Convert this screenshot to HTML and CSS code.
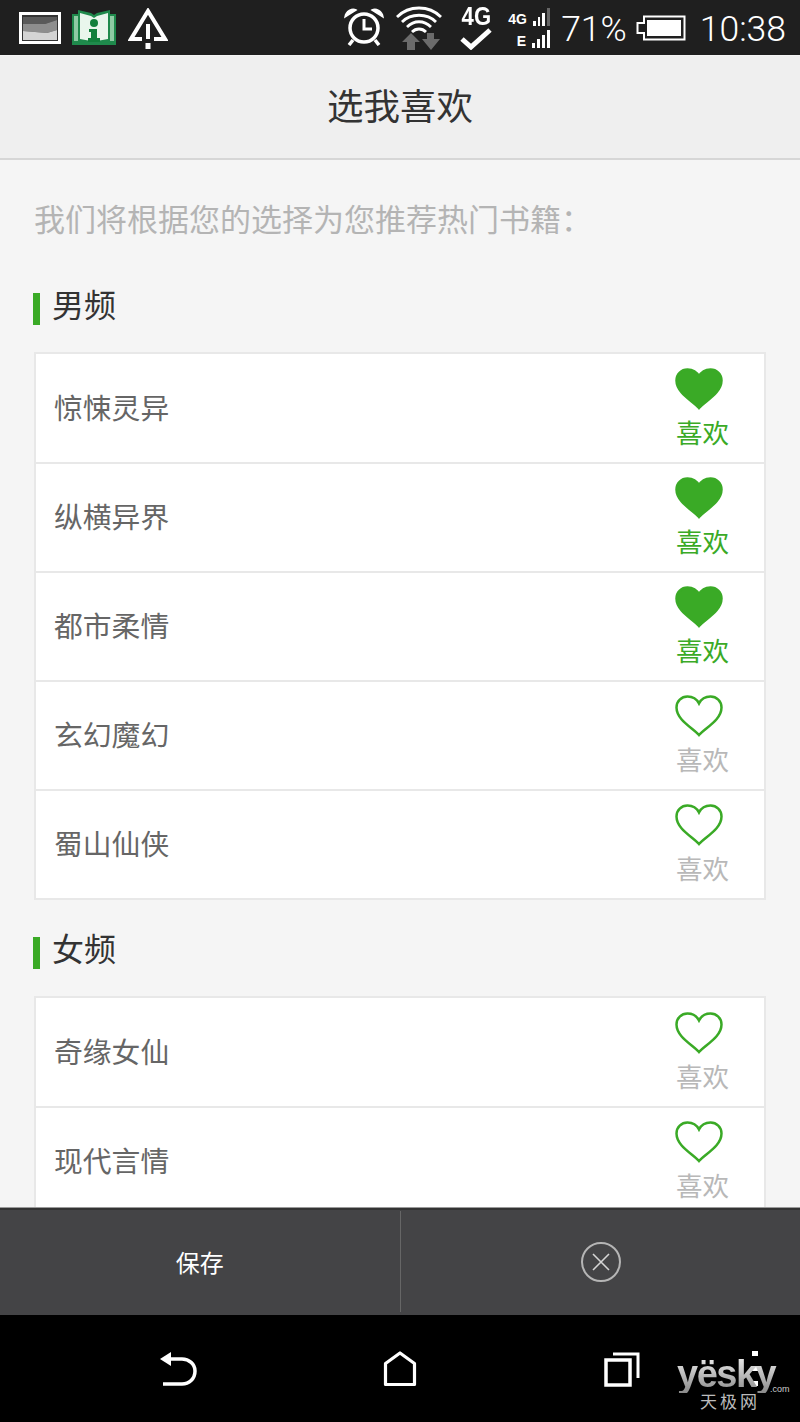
FILE: index.html
```html
<!DOCTYPE html>
<html lang="zh-CN">
<head>
    <meta charset="UTF-8">
    <title>选我喜欢</title>
    <link rel="stylesheet" href="styles.css">
</head>
<body>
<svg class="defs" width="0" height="0">
    <symbol id="heart" viewBox="0 0 48 42">
        <path d="M24 40C18 33 1.500 25 1.500 12.500C1.500 6 6.500 1.500 12.500 1.500C17.500 1.500 22 4.500 24 8.500C26 4.500 30.500 1.500 35.500 1.500C41.500 1.500 46.500 6 46.500 12.500C46.500 25 30 33 24 40Z"/>
    </symbol>
</svg>

<div class="page">
    <div class="status-bar">
        <div class="status-left">
            <svg class="ic-picture" width="42" height="32" viewBox="0 0 42 32">
                <rect x="1.500" y="1.500" width="39" height="29" fill="#333" stroke="#fff" stroke-width="3"/>
                <path d="M4 5H38V8L26 12L4 12Z" fill="#5a5a5a"/>
                <path d="M4 12L26 12L38 8V18L28 21L4 19Z" fill="#8e8e8e"/>
                <path d="M4 19L28 21L38 18V28H4Z" fill="#d4d4d4"/>
            </svg>
            <svg class="ic-book" width="46" height="37" viewBox="0 0 46 37">
                <path d="M1 5H7V1L20 4L23 6L26 4L39 1V5H45V36H1Z" fill="#1f8a4c"/>
                <path d="M3 7H7V32H3ZM39 7H43V32H39Z" fill="#8fcaa4"/>
                <path d="M9 4L20 7L23 9L26 7L37 4V30L26 32H20L9 30Z" fill="#e9f6ec"/>
                <circle cx="23" cy="14" r="4" fill="#12803c"/>
                <path d="M18 20H26V29H29V33H17V29H20V23H18Z" fill="#12803c"/>
            </svg>
            <svg class="ic-warn" width="40" height="42" viewBox="0 0 40 42">
                <path d="M14 31H3L20 3L37 31H26" fill="none" stroke="#fff" stroke-width="4"/>
                <rect x="18" y="16" width="4" height="15" fill="#fff"/>
                <rect x="17.500" y="35" width="5" height="6" fill="#fff"/>
            </svg>
        </div>
        <div class="status-right">
            <svg class="ic-alarm" width="40" height="38" viewBox="0 0 40 38">
                <circle cx="20" cy="20" r="14" fill="none" stroke="#fff" stroke-width="3.500"/>
                <path d="M20 11V21H28" fill="none" stroke="#fff" stroke-width="3"/>
                <path d="M1 9C2 3 8 0 12 2ZM39 9C38 3 32 0 28 2Z" fill="#fff" stroke="#fff" stroke-width="1.500"/>
                <path d="M9 32L5 37M31 32L35 37" stroke="#fff" stroke-width="3.500"/>
            </svg>
            <svg class="ic-wifi" width="46" height="46" viewBox="0 0 46 46">
                <g fill="none" stroke="#fff" stroke-width="2.800">
                    <path d="M1 13C13 1 33 1 45 13"/>
                    <path d="M6 18C15 9 31 9 40 18"/>
                    <path d="M11 23C18 16 28 16 35 23"/>
                    <path d="M16 28C20 24 26 24 30 28"/>
                </g>
                <path d="M15 29L24 38H19V46H11V38H6Z" fill="#6b6b6b"/>
                <path d="M26 35H31V29H38V35H44L35 46Z" fill="#6b6b6b"/>
            </svg>
            <div class="net-4g">
                <span class="net-label">4G</span>
                <svg width="32" height="22" viewBox="0 0 32 22"><path d="M2 11L11 19L30 2" fill="none" stroke="#fff" stroke-width="5"/></svg>
            </div>
            <div class="signal">
                <div class="signal-row"><span class="signal-label">4G</span><i class="bar b1"></i><i class="bar b2"></i><i class="bar b3"></i><i class="bar b4 dim"></i></div>
                <div class="signal-row"><span class="signal-label">E</span><i class="bar b1"></i><i class="bar b2"></i><i class="bar b3"></i><i class="bar b4"></i></div>
            </div>
            <span class="battery-pct">71%</span>
            <svg class="ic-battery" width="50" height="26" viewBox="0 0 50 26">
                <path d="M8 1.500H48.500V24.500H8V18H1.500V8H8Z" fill="none" stroke="#fff" stroke-width="2"/>
                <rect x="11" y="5" width="34" height="16" fill="#fff"/>
            </svg>
            <span class="clock">10:38</span>
        </div>
    </div>

    <div class="title-bar">选我喜欢</div>

    <div class="content">
        <p class="intro">我们将根据您的选择为您推荐热门书籍<span class="punct">：</span></p>

        <h2 class="section-title">男频</h2>
        <div class="list">
            <div class="row">
                <span class="row-name">惊悚灵异</span>
                <div class="like on"><svg class="heart"><use href="#heart"/></svg><span>喜欢</span></div>
            </div>
            <div class="row">
                <span class="row-name">纵横异界</span>
                <div class="like on"><svg class="heart"><use href="#heart"/></svg><span>喜欢</span></div>
            </div>
            <div class="row">
                <span class="row-name">都市柔情</span>
                <div class="like on"><svg class="heart"><use href="#heart"/></svg><span>喜欢</span></div>
            </div>
            <div class="row">
                <span class="row-name">玄幻魔幻</span>
                <div class="like"><svg class="heart"><use href="#heart"/></svg><span>喜欢</span></div>
            </div>
            <div class="row">
                <span class="row-name">蜀山仙侠</span>
                <div class="like"><svg class="heart"><use href="#heart"/></svg><span>喜欢</span></div>
            </div>
        </div>

        <h2 class="section-title">女频</h2>
        <div class="list">
            <div class="row">
                <span class="row-name">奇缘女仙</span>
                <div class="like"><svg class="heart"><use href="#heart"/></svg><span>喜欢</span></div>
            </div>
            <div class="row">
                <span class="row-name">现代言情</span>
                <div class="like"><svg class="heart"><use href="#heart"/></svg><span>喜欢</span></div>
            </div>
        </div>
    </div>

    <div class="action-bar">
        <div class="action">保存</div>
        <div class="action">
            <svg class="ic-close" width="42" height="42" viewBox="0 0 42 42">
                <circle cx="21" cy="21" r="19" fill="none" stroke="#b5b5b5" stroke-width="2"/>
                <path d="M13 13L29 29M29 13L13 29" stroke="#d5d5d5" stroke-width="1.600"/>
            </svg>
        </div>
    </div>

    <div class="nav-bar">
        <svg width="40" height="36" viewBox="0 0 40 36">
            <path d="M2 8L13 1V15Z" fill="#fff"/>
            <path d="M10 8H24C31 8 37 13 37 20C37 28 31 33 24 33H5" fill="none" stroke="#fff" stroke-width="3.500"/>
        </svg>
        <svg width="40" height="36" viewBox="0 0 40 36">
            <path d="M5.500 12.500L20 2L34.500 12.500V33.500H5.500Z" fill="none" stroke="#fff" stroke-width="3.200" stroke-linejoin="round"/>
        </svg>
        <svg width="40" height="36" viewBox="0 0 40 36">
            <rect x="4" y="9" width="24" height="25" fill="none" stroke="#fff" stroke-width="3.500"/>
            <path d="M11 3H36V27" fill="none" stroke="#fff" stroke-width="3"/>
        </svg>
        <div class="menu-dots"><i></i><i></i><i></i></div>
        <div class="watermark">
            <div class="wm-logo">yësky</div>
            <span class="wm-com">.com</span>
            <div class="wm-cn">天极网</div>
        </div>
    </div>
</div>
</body>
</html>
```

FILE: styles.css
```css
* {
    box-sizing: border-box;
}
html, body {
    margin: 0;
    padding: 0;
}
body {
    font-family: "Noto Sans CJK SC", "Liberation Sans", sans-serif;
    background-color: #000;
}
.defs {
    display: block;
    height: 0;
}
.page {
    width: 800px;
    height: 1422px;
    display: flex;
    flex-direction: column;
    overflow: hidden;
    background-color: #f5f5f5;
}

/* status bar */
.status-bar {
    height: 56px;
    flex: none;
    display: flex;
    justify-content: space-between;
    align-items: center;
    padding: 0 14px 0 19px;
    background-color: #1f1f1f;
    border-bottom: 1px solid #f4f4f4;
    color: #fff;
}
.status-left, .status-right {
    display: flex;
    align-items: center;
}
.ic-book {
    margin-left: 10px;
}
.ic-warn {
    margin-left: 11px;
    margin-top: 3px;
}
.ic-alarm {
    margin-top: -2px;
}
.ic-wifi {
    margin-left: 12px;
    margin-top: -1px;
}
.net-4g {
    margin-left: 18px;
    width: 32px;
    display: flex;
    flex-direction: column;
    align-items: center;
    margin-top: -1px;
}
.net-label {
    font-family: "Liberation Sans", sans-serif;
    font-weight: bold;
    font-size: 26px;
    line-height: 23px;
    transform: scaleX(0.85);
}
.signal {
    margin-left: 16px;
    width: 42px;
    display: flex;
    flex-direction: column;
    gap: 4px;
}
.signal-row {
    height: 18px;
    display: flex;
    justify-content: flex-end;
    align-items: flex-end;
    gap: 2px;
}
.signal-label {
    font-family: "Liberation Sans", sans-serif;
    font-weight: bold;
    font-size: 14px;
    line-height: 14px;
    margin-right: 4px;
}
.bar {
    display: block;
    width: 3px;
    background-color: #fff;
}
.bar.b1 { height: 5px; }
.bar.b2 { height: 9px; }
.bar.b3 { height: 13px; }
.bar.b4 { height: 18px; }
.bar.dim { background-color: #666; }
.battery-pct, .clock {
    font-family: Roboto, sans-serif;
    font-weight: 300;
    font-size: 35.500px;
    line-height: 40px;
    padding-top: 2px;
    white-space: nowrap;
}
.battery-pct {
    margin-left: 11px;
}
.ic-battery {
    margin-left: 9px;
}
.clock {
    margin-left: 14px;
}

/* title */
.title-bar {
    height: 104px;
    flex: none;
    display: flex;
    justify-content: center;
    align-items: center;
    padding-bottom: 6px;
    background-color: #efefef;
    border-bottom: 2px solid #d6d6d6;
    font-size: 36.500px;
    color: #333;
}

/* list area */
.content {
    flex: 1;
    min-height: 0;
    overflow: hidden;
    padding: 0 34px;
}
.intro {
    margin: 35px 0 0;
    font-size: 31px;
    line-height: 46px;
    color: #b4b4b4;
    white-space: nowrap;
}
.punct {
    font-family: "Noto Sans CJK TC", sans-serif;
}
.section-title {
    height: 32px;
    margin: 0 0 0 -1px;
    display: flex;
    align-items: center;
    padding: 0 0 13px 12px;
    border-left: 7px solid #3aaa26;
    font-weight: normal;
    font-size: 32px;
    line-height: 32px;
    color: #333;
}
.intro + .section-title {
    margin-top: 52px;
}
.list {
    margin-top: 27px;
    background-color: #fff;
    border: 2px solid #e8e8e8;
}
.list + .section-title {
    margin-top: 37px;
}
.row {
    height: 109px;
    display: flex;
    justify-content: space-between;
    align-items: flex-start;
    padding: 0 35px 0 18px;
    border-top: 2px solid #e8e8e8;
}
.row:first-child {
    height: 108px;
    border-top: none;
}
.row-name {
    font-size: 28.800px;
    line-height: 104px;
    color: #666;
}
.row:first-child .row-name {
    line-height: 106px;
}
.like {
    width: 53px;
    padding-top: 13px;
    display: flex;
    flex-direction: column;
    align-items: flex-start;
    color: #b8b8b8;
    font-size: 26.500px;
    line-height: 38px;
}
.row:first-child .like {
    padding-top: 14px;
}
.like span {
    white-space: nowrap;
    margin-top: 3px;
}
.heart {
    width: 48px;
    height: 42px;
    margin-left: -1px;
    fill: none;
    stroke: #3aaa26;
    stroke-width: 2.500px;
}
.like.on {
    color: #3aaa26;
}
.like.on .heart {
    fill: #3aaa26;
}

/* bottom */
.action-bar {
    height: 108px;
    flex: none;
    display: flex;
    padding: 3px 0;
    background-color: #444446;
    border-top: 1px solid #9a9a9a;
    box-shadow: inset 0 2px 0 #333;
}
.action {
    flex: 1;
    display: flex;
    justify-content: center;
    align-items: center;
    color: #fff;
    font-size: 24px;
}
.action:first-child {
    border-right: 1px solid #666;
}
.ic-close {
    margin-left: 2px;
}
.nav-bar {
    height: 107px;
    flex: none;
    position: relative;
    display: flex;
    align-items: flex-start;
    gap: 182px;
    padding: 36px 0 0 158px;
    background-color: #000;
}
.menu-dots {
    margin-left: -72px;
    display: flex;
    flex-direction: column;
    gap: 10px;
}
.menu-dots i {
    display: block;
    width: 6px;
    height: 5px;
    background-color: #fff;
}

/* watermark over the nav bar */
.watermark {
    position: absolute;
    left: 677px;
    top: 40px;
    width: 120px;
}
.wm-logo {
    font-family: "Liberation Sans", sans-serif;
    font-weight: bold;
    font-size: 38px;
    line-height: 38px;
    letter-spacing: -1.500px;
    color: transparent;
    background: linear-gradient(#f0f0f0, #8a8a8a);
    -webkit-background-clip: text;
    background-clip: text;
    white-space: nowrap;
    width: 102px;
}
.wm-com {
    position: absolute;
    left: 93px;
    top: 28px;
    font-family: "Liberation Sans", sans-serif;
    font-size: 9px;
    line-height: 12px;
    color: #ccc;
}
.wm-cn {
    margin: 0 0 0 23px;
    font-size: 17px;
    line-height: 15px;
    letter-spacing: 3px;
    color: #bbb;
    white-space: nowrap;
}
```
